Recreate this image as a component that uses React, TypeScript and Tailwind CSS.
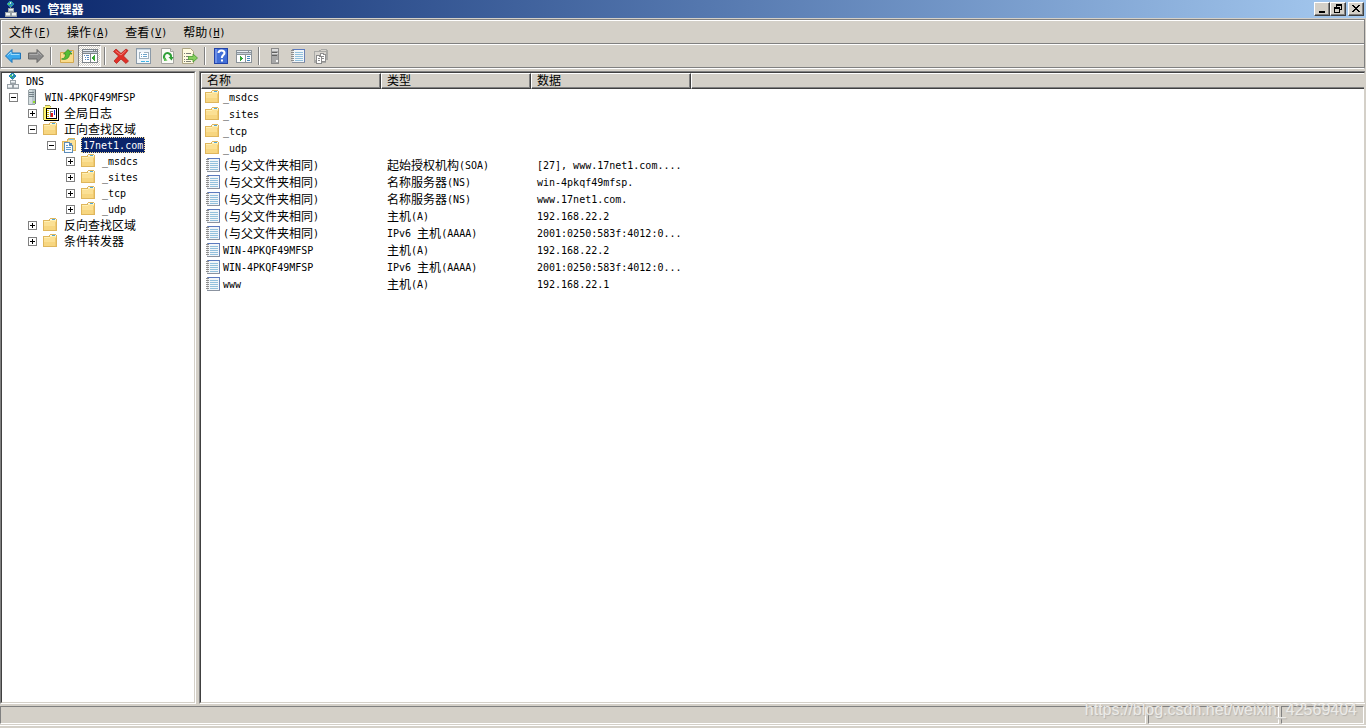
import { ReactNode } from "react";
import clsx from "clsx";

type IconName =
  | "dns"
  | "server"
  | "log"
  | "folder"
  | "zone"
  | "record";

type TreeItem = {
  label: string;
  icon: IconName;
  depth: number;
  state?: "open" | "closed";
  selected?: boolean;
};

type RecordRow = {
  name: string;
  icon: IconName;
  type?: string;
  data?: string;
};

const tree: TreeItem[] = [
  { label: "DNS", icon: "dns", depth: 0 },
  { label: "WIN-4PKQF49MFSP", icon: "server", depth: 1, state: "open" },
  { label: "全局日志", icon: "log", depth: 2, state: "closed" },
  { label: "正向查找区域", icon: "folder", depth: 2, state: "open" },
  { label: "17net1.com", icon: "zone", depth: 3, state: "open", selected: true },
  { label: "_msdcs", icon: "folder", depth: 4, state: "closed" },
  { label: "_sites", icon: "folder", depth: 4, state: "closed" },
  { label: "_tcp", icon: "folder", depth: 4, state: "closed" },
  { label: "_udp", icon: "folder", depth: 4, state: "closed" },
  { label: "反向查找区域", icon: "folder", depth: 2, state: "closed" },
  { label: "条件转发器", icon: "folder", depth: 2, state: "closed" },
];

const rows: RecordRow[] = [
  { name: "_msdcs", icon: "folder" },
  { name: "_sites", icon: "folder" },
  { name: "_tcp", icon: "folder" },
  { name: "_udp", icon: "folder" },
  { name: "(与父文件夹相同)", icon: "record", type: "起始授权机构(SOA)", data: "[27], www.17net1.com...." },
  { name: "(与父文件夹相同)", icon: "record", type: "名称服务器(NS)", data: "win-4pkqf49mfsp." },
  { name: "(与父文件夹相同)", icon: "record", type: "名称服务器(NS)", data: "www.17net1.com." },
  { name: "(与父文件夹相同)", icon: "record", type: "主机(A)", data: "192.168.22.2" },
  { name: "(与父文件夹相同)", icon: "record", type: "IPv6 主机(AAAA)", data: "2001:0250:583f:4012:0..." },
  { name: "WIN-4PKQF49MFSP", icon: "record", type: "主机(A)", data: "192.168.22.2" },
  { name: "WIN-4PKQF49MFSP", icon: "record", type: "IPv6 主机(AAAA)", data: "2001:0250:583f:4012:0..." },
  { name: "www", icon: "record", type: "主机(A)", data: "192.168.22.1" },
];

const menus = [
  { label: "文件", key: "F" },
  { label: "操作", key: "A" },
  { label: "查看", key: "V" },
  { label: "帮助", key: "H" },
];

const indent = ["pl-[3px]", "pl-[7px]", "pl-[26px]", "pl-[45px]", "pl-[64px]"];

// Chinese runs are 12px wide per glyph, latin runs half of that
const Text = ({ children }: { children: string }) => (
  <>
    {children.split(/([\u4e00-\u9fff]+)/).map((part, idx) =>
      /[\u4e00-\u9fff]/.test(part) ? (
        <span key={idx} className="align-[-1px] text-xs leading-none font-['Noto_Sans_CJK_SC',sans-serif]">
          {part}
        </span>
      ) : (
        part
      )
    )}
  </>
);

const Svg = ({ children, crisp = true }: { children: ReactNode; crisp?: boolean }) => (
  <svg
    width="16"
    height="16"
    viewBox="0 0 16 16"
    className="shrink-0"
    shapeRendering={crisp ? "crispEdges" : "auto"}
    aria-hidden="true"
  >
    {children}
  </svg>
);

const DnsIcon = () => (
  <Svg>
    <path d="M6 0h3v1h1v1h1v2h-1v1H9v1H6V5H5V4H4V2h1V1h1z" fill="#2787b8" />
    <path d="M5 2h2v2H5zM8 1h1v1H8zM8 4h1v1H8z" fill="#4fc46a" />
    <path d="M7 1h1v2H7z" fill="#c5ecff" />
    <path d="M7 6h1v1H7z" fill="#8b949b" />
    <path d="M5 7h6v4H5z" fill="#98a0a6" />
    <path d="M6 8h4v1H6z" fill="#eef2f4" />
    <path d="M6 9h4v1H6z" fill="#c9d0d4" />
    <path d="M2 11h6v5H2zM8 11h6v5H8z" fill="#98a0a6" />
    <path d="M3 12h4v2H3zM9 12h4v2H9z" fill="#f0f3f5" />
    <path d="M3 14h4v1H3zM9 14h4v1H9z" fill="#c3cace" />
  </Svg>
);

const ServerIcon = () => (
  <Svg>
    <path d="M4 1h1V0h7v15h-1v1H4z" fill="#9aa3a7" />
    <path d="M5 1h6v14H5z" fill="#b7c4c8" />
    <path d="M5 1h3v14H5z" fill="#d4dee0" />
    <path d="M11 1h1v14h-1z" fill="#6b757a" />
    <path d="M5 3h5v1H5zM5 5h5v1H5zM5 7h5v1H5z" fill="#738087" />
    <path d="M9 12h2v2H9z" fill="#8fdc2c" />
  </Svg>
);

const LogIcon = () => (
  <Svg>
    <path d="M1 2h1V1h5v1h1v1h6v12H1z" fill="#fff36b" />
    <path d="M1 2h1v1H1zM7 1h1v1H7zM2 0h5v1H2zM0 2h1v13H0z" fill="#a3a15a" />
    <path d="M15 3h1v13H1v-1h14z" fill="#000" />
    <path d="M3 3h11v11H3z" fill="#000" />
    <path d="M4 4h9v9H4z" fill="#fff" />
    <path d="M4 5h2v1H4zM4 7h2v1H4zM4 9h2v1H4zM4 11h2v1H4z" fill="#c8b400" />
    <path d="M7 6h3v1H8v5H7z" fill="#777" />
    <path d="M8 8h2v4H8z" fill="#e01818" />
    <path d="M11 5h1v5h-1z" fill="#1830d0" />
  </Svg>
);

const FolderIcon = () => (
  <Svg>
    <path d="M0 3h6V2h1V1h6v1h1v12H0z" fill="#dfb65c" />
    <path d="M7 2h6v1H7z" fill="#f6f8f8" />
    <path d="M9 2h3v1H9z" fill="#4fa8d8" />
    <path d="M1 4h12v9H1z" fill="#fbe094" />
    <path d="M1 4h6v1H1zM7 3h6v1H7z" fill="#fff0b4" />
    <path d="M1 9h12v4H1z" fill="#f7d680" />
    <path d="M12 5h1v8h-1z" fill="#f0ca70" />
  </Svg>
);

const ZoneIcon = () => (
  <Svg>
    <path d="M0 4h5V2h1V1h7v2h1v11H0z" fill="#dfb65c" />
    <path d="M7 2h5v1H7z" fill="#7fc4e4" />
    <path d="M1 5h5V3h7v10H1z" fill="#fbe29a" />
    <path d="M2 5h6v1h2v2h1v8H2z" fill="#5c8cb8" />
    <path d="M3 6h4v3h3v6H3z" fill="#f8fcff" />
    <path d="M4 8h2v1H4zM4 10h5v1H4zM4 12h5v1H4z" fill="#5d99cc" />
  </Svg>
);

const RecordIcon = () => (
  <Svg>
    <path d="M2 1h13v14H2z" fill="#8b93a0" />
    <path d="M3 2h11v12H3z" fill="#f2f6f9" />
    <path d="M3 1h12v1H3z" fill="#5c7abf" />
    <path d="M14 2h1v12h-1z" fill="#6a82b4" />
    <path d="M5 4h8v1H5zM5 6h8v1H5zM5 8h8v1H5zM5 10h8v1H5zM5 12h8v1H5z" fill="#92c0dc" />
    <path d="M1 2h3v1H1zM1 4h3v1H1zM1 6h3v1H1zM1 8h3v1H1zM1 10h3v1H1zM1 12h3v1H1z" fill="#8c8c8c" />
    <path d="M2 3h1v1H2zM2 5h1v1H2zM2 7h1v1H2zM2 9h1v1H2zM2 11h1v1H2zM2 13h1v1H2z" fill="#dcdcdc" />
  </Svg>
);

const icons: Record<IconName, () => ReactNode> = {
  dns: DnsIcon,
  server: ServerIcon,
  log: LogIcon,
  folder: FolderIcon,
  zone: ZoneIcon,
  record: RecordIcon,
};

const BackIcon = () => (
  <Svg crisp={false}>
    <path d="M.5 8 7 1.500V5h8.500v6H7v3.500z" fill="#3aa9ee" stroke="#1f74b8" />
    <path d="M2.500 7.500 6 4V6.500h8.500" fill="none" stroke="#9fdcfb" />
  </Svg>
);

const ForwardIcon = () => (
  <Svg crisp={false}>
    <path d="M15.500 8 9 1.500V5H.5v6H9v3.500z" fill="#8a8a8a" stroke="#666" />
    <path d="M1.500 6.500H10V4l3.500 3.500" fill="none" stroke="#adadad" />
  </Svg>
);

const UpIcon = () => (
  <Svg crisp={false}>
    <path d="M1.500 4.500h6l1-2h6v12h-13z" fill="#f9dc8c" stroke="#d3a84e" />
    <path d="M10 3.500h3" stroke="#58a9dc" />
    <path d="M2.500 11c3-.5 4-2 4-5H4.500l4.500-4.500L13 6h-2.500c0 4-3.500 6.500-8 5z" fill="#55bd35" stroke="#2f8a1c" strokeWidth=".7" />
  </Svg>
);

const TreePaneIcon = () => (
  <Svg>
    <path d="M0 1h16v14H0z" fill="#7f868c" />
    <path d="M1 2h10v1H1zM12 2h1v1h-1zM14 2h1v1h-1z" fill="#e9eef5" />
    <path d="M1 4h14v1H1z" fill="#c8d0da" />
    <path d="M1 6h7v8H1zM9 6h6v8H9z" fill="#fff" />
    <path d="M2 7h1v1H2zM4 7h3v1H4zM3 9h1v1H3zM5 9h2v1H5zM3 11h1v1H3zM5 11h2v1H5z" fill="#5c8cbf" />
    <path d="M12 7h1v6h-1zM11 8h1v4h-1zM10 9h1v2h-1z" fill="#36a834" />
  </Svg>
);

const DeleteIcon = () => (
  <Svg crisp={false}>
    <path d="M3 1 8 5.500 13 1l2 1.500L10.500 8l5 5-2.500 2.500-5-4.500-4.500 4.500L1 13l4.500-5-5-4.500z" fill="#e03028" stroke="#b01c18" strokeWidth=".7" />
    <path d="m2.500 3 5.500 4L13 2.500" fill="none" stroke="#f08078" />
  </Svg>
);

const PropertiesIcon = () => (
  <Svg>
    <path d="M0 0h15v16H0z" fill="#8b9aa8" />
    <path d="M1 1h13v14H1z" fill="#f1f6fa" />
    <path d="M1 1h13v1H1z" fill="#c6d6e2" />
    <path d="M3 4h10v7H3z" fill="#a2b2be" />
    <path d="M4 5h8v5H4z" fill="#fff" />
    <path d="M5 4h3v1H5z" fill="#f1f6fa" />
    <path d="M5 6h1v1H5zM7 6h4v1H7zM5 8h1v1H5zM7 8h4v1H7z" fill="#6aa4cc" />
    <path d="M5 13h4v1H5zM10 13h3v1h-3z" fill="#40b4e5" />
  </Svg>
);

const RefreshIcon = () => (
  <Svg crisp={false}>
    <path d="M2.500.5h9l3 3v12h-12z" fill="#fbfbf7" stroke="#a5a5a0" />
    <path d="M11.500.5v3h3" fill="#ddd" stroke="#a5a5a0" />
    <path d="M6.500 11.500A3.500 3.500 0 1 1 12 9" fill="none" stroke="#2f9f38" strokeWidth="2" />
    <path d="M9.500 9h5l-2 3.500z" fill="#2f9f38" />
    <path d="M5 13v-4l3.500 3.500z" fill="#55bd4a" />
  </Svg>
);

const ExportIcon = () => (
  <Svg crisp={false}>
    <path d="M.5.500h8l3 3v12H.5z" fill="#fffbe0" stroke="#aca483" />
    <path d="M2 5.500h1m1 0h5M2 8.500h1m1 0h3M2 11.500h1m1 0h3M2 13.500h1m1 0h5" stroke="#7b7d78" />
    <path d="M6.500 8.500H11V6l4.500 4-4.500 4v-2.500H6.500z" fill="#86cf5e" stroke="#469a30" strokeWidth=".8" />
  </Svg>
);

const HelpIcon = () => (
  <Svg crisp={false}>
    <path d="M1 0h14v16H1z" fill="#2343a8" />
    <path d="M4 1h10v14H4z" fill="#426fd7" />
    <path d="M2 1h2v14H2z" fill="#6f91e8" />
    <path d="M5.500 5c0-3.500 6-3.500 6 0 0 2-2.700 2.300-2.700 5" fill="none" stroke="#fff" strokeWidth="2" />
    <path d="M8 11.500h2v2H8z" fill="#fff" />
  </Svg>
);

const ActionPaneIcon = () => (
  <Svg>
    <path d="M0 2h16v13H0z" fill="#8b939a" />
    <path d="M1 3h11v1H1zM13 3h2v1h-2z" fill="#e8eef3" />
    <path d="M1 5h14v1H1z" fill="#c6d0da" />
    <path d="M1 7h8v7H1zM10 7h5v7h-5z" fill="#fff" />
    <path d="M11 8h3v1h-3zM11 10h3v1h-3zM11 12h3v1h-3z" fill="#4386bd" />
    <path d="M4 8h1v5H4zM5 9h1v3H5zM6 10h1v1H6z" fill="#32a737" />
  </Svg>
);

const GrayServerIcon = () => (
  <Svg>
    <path d="M4 0h8v16H4z" fill="#8b8b8b" />
    <path d="M5 1h6v14H5z" fill="#a7a7a7" />
    <path d="M5 1h6v2H5zM5 5h6v1H5z" fill="#dcdcdc" />
    <path d="M5 4h5v1H5zM5 7h5v1H5z" fill="#606060" />
    <path d="M9 12h2v2H9z" fill="#f4f4f4" />
  </Svg>
);

const CopyIcon = () => (
  <Svg>
    <path d="M1 3h5V2h2V1h6v1h1v10h-2v3H1z" fill="#a9a9a6" />
    <path d="M2 4h11v8H2zM8 2h5v1H8z" fill="#d8d5cf" />
    <path d="M7 5h4v1h2v8H7z" fill="#8f8f8f" />
    <path d="M8 6h2v1h2v6H8z" fill="#fff" />
    <path d="M3 7h4v1h2v8H3z" fill="#8a8a8a" />
    <path d="M4 8h2v1h2v6H4z" fill="#fff" />
    <path d="M5 10h2v1H5zM5 12h2v1H5zM9 8h2v1H9zM9 10h2v1H9z" fill="#8b8b8b" />
  </Svg>
);

const toolbar = [
  [
    { title: "后退", icon: <BackIcon /> },
    { title: "前进", icon: <ForwardIcon /> },
  ],
  [
    { title: "上移一级", icon: <UpIcon /> },
    { title: "显示/隐藏控制台树", icon: <TreePaneIcon />, pressed: true },
  ],
  [
    { title: "删除", icon: <DeleteIcon /> },
    { title: "属性", icon: <PropertiesIcon /> },
    { title: "刷新", icon: <RefreshIcon /> },
    { title: "导出列表", icon: <ExportIcon /> },
  ],
  [
    { title: "帮助", icon: <HelpIcon /> },
    { title: "显示/隐藏操作窗格", icon: <ActionPaneIcon /> },
  ],
  [
    { title: "新建服务器", icon: <GrayServerIcon /> },
    { title: "新建记录", icon: <RecordIcon /> },
    { title: "新建区域", icon: <CopyIcon /> },
  ],
];

const CaptionButton = ({ label, children }: { label: string; children: ReactNode }) => (
  <button
    aria-label={label}
    className="flex h-[14px] w-4 items-center justify-center border border-t-white border-l-white border-r-[#404040] border-b-[#404040] bg-[#d4d0c8] shadow-[inset_-1px_-1px_0_#808080]"
  >
    <svg width="12" height="10" viewBox="0 0 12 10" className="shrink-0" shapeRendering="crispEdges" aria-hidden="true">
      {children}
    </svg>
  </button>
);

const TitleBar = () => (
  <header className="flex h-[18px] shrink-0 items-center bg-linear-to-r from-[#0a246a] to-[#a6caf0] pr-[2px] pl-[3px]">
    <DnsIcon />
    <h1 className="flex-1 pt-[2px] pl-[2px] text-[11px] leading-4 font-bold whitespace-pre text-white">
      <Text>DNS 管理器</Text>
    </h1>
    <div className="flex">
      <CaptionButton label="最小化">
        <path d="M3 7h6v2H3z" />
      </CaptionButton>
      <CaptionButton label="还原">
        <path d="M4 0h6v6H8V5h1V2H5v1H4z" />
        <path d="M2 3h6v6H2zM3 5v3h4V5z" fillRule="evenodd" />
      </CaptionButton>
      <div className="w-[2px]" />
      <CaptionButton label="关闭">
        <path d="M2 1h2v1h1v1h2V2h1V1h2v1H9v1H8v1H7v1h1v1h1v1h1v1H8V7H7V6H5v1H4v1H2V7h1V6h1V5h1V4H4V3H3V2H2z" />
      </CaptionButton>
    </div>
  </header>
);

const MenuBar = () => (
  <nav className="flex h-6 items-center gap-4 border-b border-[#808080] pt-[2px] pl-2">
    {menus.map((menu) => (
      <button key={menu.key} className="leading-4">
        <Text>{menu.label}</Text>(<span className="underline">{menu.key}</span>)
      </button>
    ))}
  </nav>
);

const Toolbar = () => (
  <div className="flex h-6 items-center border-t border-b border-t-white border-b-[#808080]">
    {toolbar.map((group, idx) => (
      <div key={idx} className="flex items-center">
        {idx > 0 && <div className="mx-[3px] h-[18px] w-[2px] border-r border-l border-l-[#808080] border-r-white" />}
        {group.map((tool) => (
          <button
            key={tool.title}
            title={tool.title}
            aria-label={tool.title}
            className={clsx(
              "flex h-[22px] w-[23px] items-center justify-center",
              "pressed" in tool &&
                "border border-t-[#808080] border-l-[#808080] border-r-white border-b-white bg-[repeating-conic-gradient(#ffffff_0_25%,#d4d0c8_0_50%)] bg-[length:2px_2px]"
            )}
          >
            {tool.icon}
          </button>
        ))}
      </div>
    ))}
  </div>
);

const Expander = ({ open }: { open: boolean }) => (
  <button aria-label={open ? "折叠" : "展开"} className="mr-[6px] shrink-0">
    <svg width="9" height="9" viewBox="0 0 9 9" shapeRendering="crispEdges" className="block">
      <path d="M0 0h9v9H0z" fill="#808080" />
      <path d="M1 1h7v7H1z" fill="#fff" />
      <path d="M2 4h5v1H2z" fill="#000" />
      {!open && <path d="M4 2h1v5H4z" fill="#000" />}
    </svg>
  </button>
);

const TreePane = () => (
  <aside className="w-[196px] shrink-0 border border-t-[#808080] border-l-[#808080] border-r-white border-b-white">
    <ul className="h-full border border-t-[#404040] border-l-[#404040] border-r-[#d4d0c8] border-b-[#d4d0c8] bg-white">
      {tree.map((item) => {
        const Icon = icons[item.icon];
        return (
          <li key={item.label} className={clsx("flex h-4 items-center", indent[item.depth])}>
            {item.state && <Expander open={item.state === "open"} />}
            <Icon />
            <span
              className={clsx(
                "ml-[3px] px-[2px] pt-[2px] leading-[14px] whitespace-nowrap",
                item.selected && "bg-[#0a246a] text-white outline-1 -outline-offset-1 outline-dotted outline-[#f5db95]"
              )}
            >
              <Text>{item.label}</Text>
            </span>
          </li>
        );
      })}
    </ul>
  </aside>
);

const headCell =
  "h-4 border border-t-white border-l-white border-b-[#404040] bg-[#d4d0c8] p-0 pl-[5px] text-left font-normal leading-[14px]";
const headEdge = "border-r-[#404040] shadow-[inset_-1px_-1px_0_#808080]";

const RecordPane = () => (
  <main className="min-w-0 flex-1 border border-r-0 border-t-[#808080] border-l-[#808080] border-b-white">
    <div className="h-full border border-t-[#404040] border-l-[#404040] border-r-[#d4d0c8] border-b-[#d4d0c8] bg-white">
      <table className="w-full table-fixed border-separate border-spacing-0">
        <thead>
          <tr>
            <th className={clsx(headCell, headEdge, "w-[180px]")}><Text>名称</Text></th>
            <th className={clsx(headCell, headEdge, "w-[150px]")}><Text>类型</Text></th>
            <th className={clsx(headCell, headEdge, "w-[160px]")}><Text>数据</Text></th>
            <th className={clsx(headCell, "border-r-0 shadow-[inset_0_-1px_0_#808080]")} />
          </tr>
        </thead>
        <tbody>
          {rows.map((row, idx) => {
            const Icon = icons[row.icon];
            return (
              <tr key={idx}>
                <td className="p-0 pl-1">
                  <div className="flex h-[17px] gap-[2px] leading-[17px] whitespace-nowrap">
                    <Icon />
                    <span><Text>{row.name}</Text></span>
                  </div>
                </td>
                <td className="p-0 pl-[6px] leading-[17px] whitespace-nowrap"><Text>{row.type ?? ""}</Text></td>
                <td className="p-0 pl-[6px] leading-[17px] whitespace-nowrap"><Text>{row.data ?? ""}</Text></td>
                <td />
              </tr>
            );
          })}
        </tbody>
      </table>
    </div>
  </main>
);

const statusCell = "border border-t-[#808080] border-l-[#808080] border-r-white border-b-white";

const StatusBar = () => (
  <footer className="relative flex h-5 shrink-0 gap-[2px] border-b border-white pr-[2px] pb-px">
    <div className={clsx(statusCell, "flex-1")} />
    <div className={clsx(statusCell, "w-[131px]")} />
    <div className={clsx(statusCell, "w-[83px]")} />
    <span className="absolute -top-2 right-[9px] font-['Liberation_Sans',sans-serif] text-base leading-6 text-[#ecebe8] [text-shadow:1px_1px_1px_#b4b2ae]">
      https://blog.csdn.net/weixin_42569404
    </span>
  </footer>
);

const App = () => {
  return (
    <div className="flex h-screen flex-col overflow-hidden bg-[#d4d0c8] pb-[2px] font-['DejaVu_Sans_Mono','Noto_Sans_CJK_SC',monospace] text-[10px] text-black">
      <TitleBar />
      <div className="mt-px mr-px shrink-0 border border-b-white border-t-[#808080] border-r-[#808080] border-l-[#808080] shadow-[inset_1px_1px_0_#fff]">
        <MenuBar />
        <Toolbar />
      </div>
      <div className="mt-[2px] mb-[2px] flex min-h-0 flex-1 gap-[3px] pr-px">
        <TreePane />
        <RecordPane />
      </div>
      <StatusBar />
    </div>
  );
};

export default App;
